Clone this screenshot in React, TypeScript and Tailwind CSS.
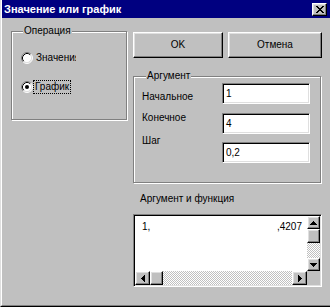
import React from "react";

const font = "font-['Liberation_Sans',Arial,sans-serif]";
const raised =
  "border border-t-white border-l-white border-r-black border-b-black shadow-[inset_-1px_-1px_#808080,inset_1px_1px_#dfdfdf]";
const sunken =
  "border border-t-[#808080] border-l-[#808080] border-r-white border-b-white shadow-[inset_1px_1px_#000,inset_-1px_-1px_#dfdfdf]";
const etched = "border border-[#808080] shadow-[inset_1px_1px_#fff,1px_1px_#fff]";
const dither =
  "bg-[image:repeating-conic-gradient(#fff_0%_25%,#c0c0c0_0%_50%)] bg-[length:2px_2px]";

function XGlyph() {
  const pts = [
    [0, 0], [1, 0], [6, 0], [7, 0],
    [1, 1], [2, 1], [5, 1], [6, 1],
    [2, 2], [3, 2], [4, 2], [5, 2],
    [3, 3], [4, 3],
    [2, 4], [3, 4], [4, 4], [5, 4],
    [1, 5], [2, 5], [5, 5], [6, 5],
    [0, 6], [1, 6], [6, 6], [7, 6],
  ];
  return (
    <svg width="8" height="7" viewBox="0 0 8 7" shapeRendering="crispEdges">
      {pts.map(([x, y], i) => (
        <rect key={i} x={x} y={y} width="1" height="1" fill="#000" />
      ))}
    </svg>
  );
}

function Radio({ checked }: { checked?: boolean }) {
  return (
    <svg width="12" height="12" viewBox="0 0 12 12" className="shrink-0">
      <circle cx="6" cy="6" r="5" fill="#fff" />
      <path d="M2.11 9.89A5.5 5.5 0 0 1 9.89 2.11" stroke="#808080" fill="none" />
      <path d="M9.89 2.11A5.5 5.5 0 0 1 2.11 9.89" stroke="#fff" fill="none" />
      <path d="M2.82 9.18A4.5 4.5 0 0 1 9.18 2.82" stroke="#000" fill="none" />
      <path d="M9.18 2.82A4.5 4.5 0 0 1 2.82 9.18" stroke="#dfdfdf" fill="none" />
      {checked && <circle cx="6" cy="6" r="2" fill="#000" />}
    </svg>
  );
}

function Arrow({ dir }: { dir: "up" | "down" | "left" | "right" }) {
  if (dir === "up" || dir === "down") {
    return (
      <svg width="7" height="4" viewBox="0 0 7 4" shapeRendering="crispEdges">
        <polygon points={dir === "up" ? "3.5,0 7,4 0,4" : "0,0 7,0 3.5,4"} fill="#000" />
      </svg>
    );
  }
  return (
    <svg width="4" height="7" viewBox="0 0 4 7" shapeRendering="crispEdges">
      <polygon points={dir === "left" ? "0,3.5 4,0 4,7" : "0,0 4,3.5 0,7"} fill="#000" />
    </svg>
  );
}

function Field({ value }: { value: string }) {
  return (
    <div className={`w-[88px] h-[21px] bg-white ${sunken} flex items-center pl-[3px] text-[10px] leading-[12px]`}>
      {value}
    </div>
  );
}

export default function App() {
  return (
    <div
      className={`w-[330px] h-[307px] bg-[#c0c0c0] border-l border-l-[#dfdfdf] border-b border-b-black ${font} text-black overflow-hidden`}
    >
      <div className="h-full border-l border-l-white border-b border-b-[#808080] flex flex-col">
        {/* title bar */}
        <div className="h-[18px] bg-[#000080] flex items-center justify-between pl-[2px] pr-[3px]">
          <span className="text-white font-bold text-[11px] leading-[13px]">Значение или график</span>
          <div className={`w-[15px] h-[13px] bg-[#c0c0c0] ${raised} flex items-center justify-center`}>
            <XGlyph />
          </div>
        </div>

        {/* body */}
        <div className="flex pl-[9px] text-[10px] leading-[12px]">
          {/* Операция group */}
          <div className={`relative mt-[13px] w-[116px] h-[89px] ${etched} pl-[9px] pt-[19px] flex flex-col gap-[15px]`}>
            <span className="absolute left-[11px] top-[-7px] bg-[#c0c0c0] px-[1px]">Операция</span>
            <div className="flex items-center h-[14px]">
              <Radio />
              <span className="ml-[3px] w-[40px] overflow-hidden whitespace-nowrap">Значения</span>
            </div>
            <div className="flex items-center h-[14px]">
              <Radio checked />
              <span className="ml-[0px] border border-dotted border-black px-[1px] leading-[12px]">График</span>
            </div>
          </div>

          {/* right column */}
          <div className="ml-[6px] flex flex-col pt-[14px]">
            <div className="flex gap-[5px]">
              <div className={`w-[90px] h-[26px] ${raised} flex items-center justify-center`}>OK</div>
              <div className={`w-[94px] h-[26px] ${raised} flex items-center justify-center`}>Отмена</div>
            </div>

            {/* Аргумент group */}
            <div className={`relative mt-[18px] w-[188px] h-[107px] ${etched} flex`}>
              <span className="absolute left-[12px] top-[-7px] bg-[#c0c0c0] px-[1px]">Аргумент</span>
              <div className="w-[88px] pl-[8px] flex flex-col">
                <span className="mt-[14px] h-[12px]">Начальное</span>
                <span className="mt-[9px] h-[12px]">Конечное</span>
                <span className="mt-[11px] h-[12px]">Шаг</span>
              </div>
              <div className="flex flex-col pt-[6px]">
                <Field value="1" />
                <div className="mt-[9px]">
                  <Field value="4" />
                </div>
                <div className="mt-[8px]">
                  <Field value="0,2" />
                </div>
              </div>
            </div>

            <span className="mt-[10px] ml-[7px] h-[12px]">Аргумент и функция</span>

            {/* list box */}
            <div className={`mt-[9px] w-[189px] h-[73px] bg-white ${sunken} p-[1px] flex flex-col`}>
              <div className="flex flex-1 min-h-0">
                <div className="flex-1 flex justify-between pl-[7px] pr-[5px] pt-[5px]">
                  <span>1,</span>
                  <span>,4207</span>
                </div>
                <div className="w-[13px] flex flex-col">
                  <div className={`h-[13px] bg-[#c0c0c0] ${raised} flex items-center justify-center`}>
                    <Arrow dir="up" />
                  </div>
                  <div className={`h-[14px] bg-[#c0c0c0] ${raised}`} />
                  <div className={`flex-1 ${dither}`} />
                  <div className={`h-[13px] bg-[#c0c0c0] ${raised} flex items-center justify-center`}>
                    <Arrow dir="down" />
                  </div>
                </div>
              </div>
              <div className="h-[14px] flex">
                <div className={`w-[15px] bg-[#c0c0c0] ${raised} flex items-center justify-center`}>
                  <Arrow dir="left" />
                </div>
                <div className={`w-[13px] bg-[#c0c0c0] ${raised}`} />
                <div className={`flex-1 ${dither}`} />
                <div className={`w-[15px] bg-[#c0c0c0] ${raised} flex items-center justify-center`}>
                  <Arrow dir="right" />
                </div>
                <div className="w-[13px] bg-[#c0c0c0]" />
              </div>
            </div>
          </div>
        </div>
      </div>
    </div>
  );
}
